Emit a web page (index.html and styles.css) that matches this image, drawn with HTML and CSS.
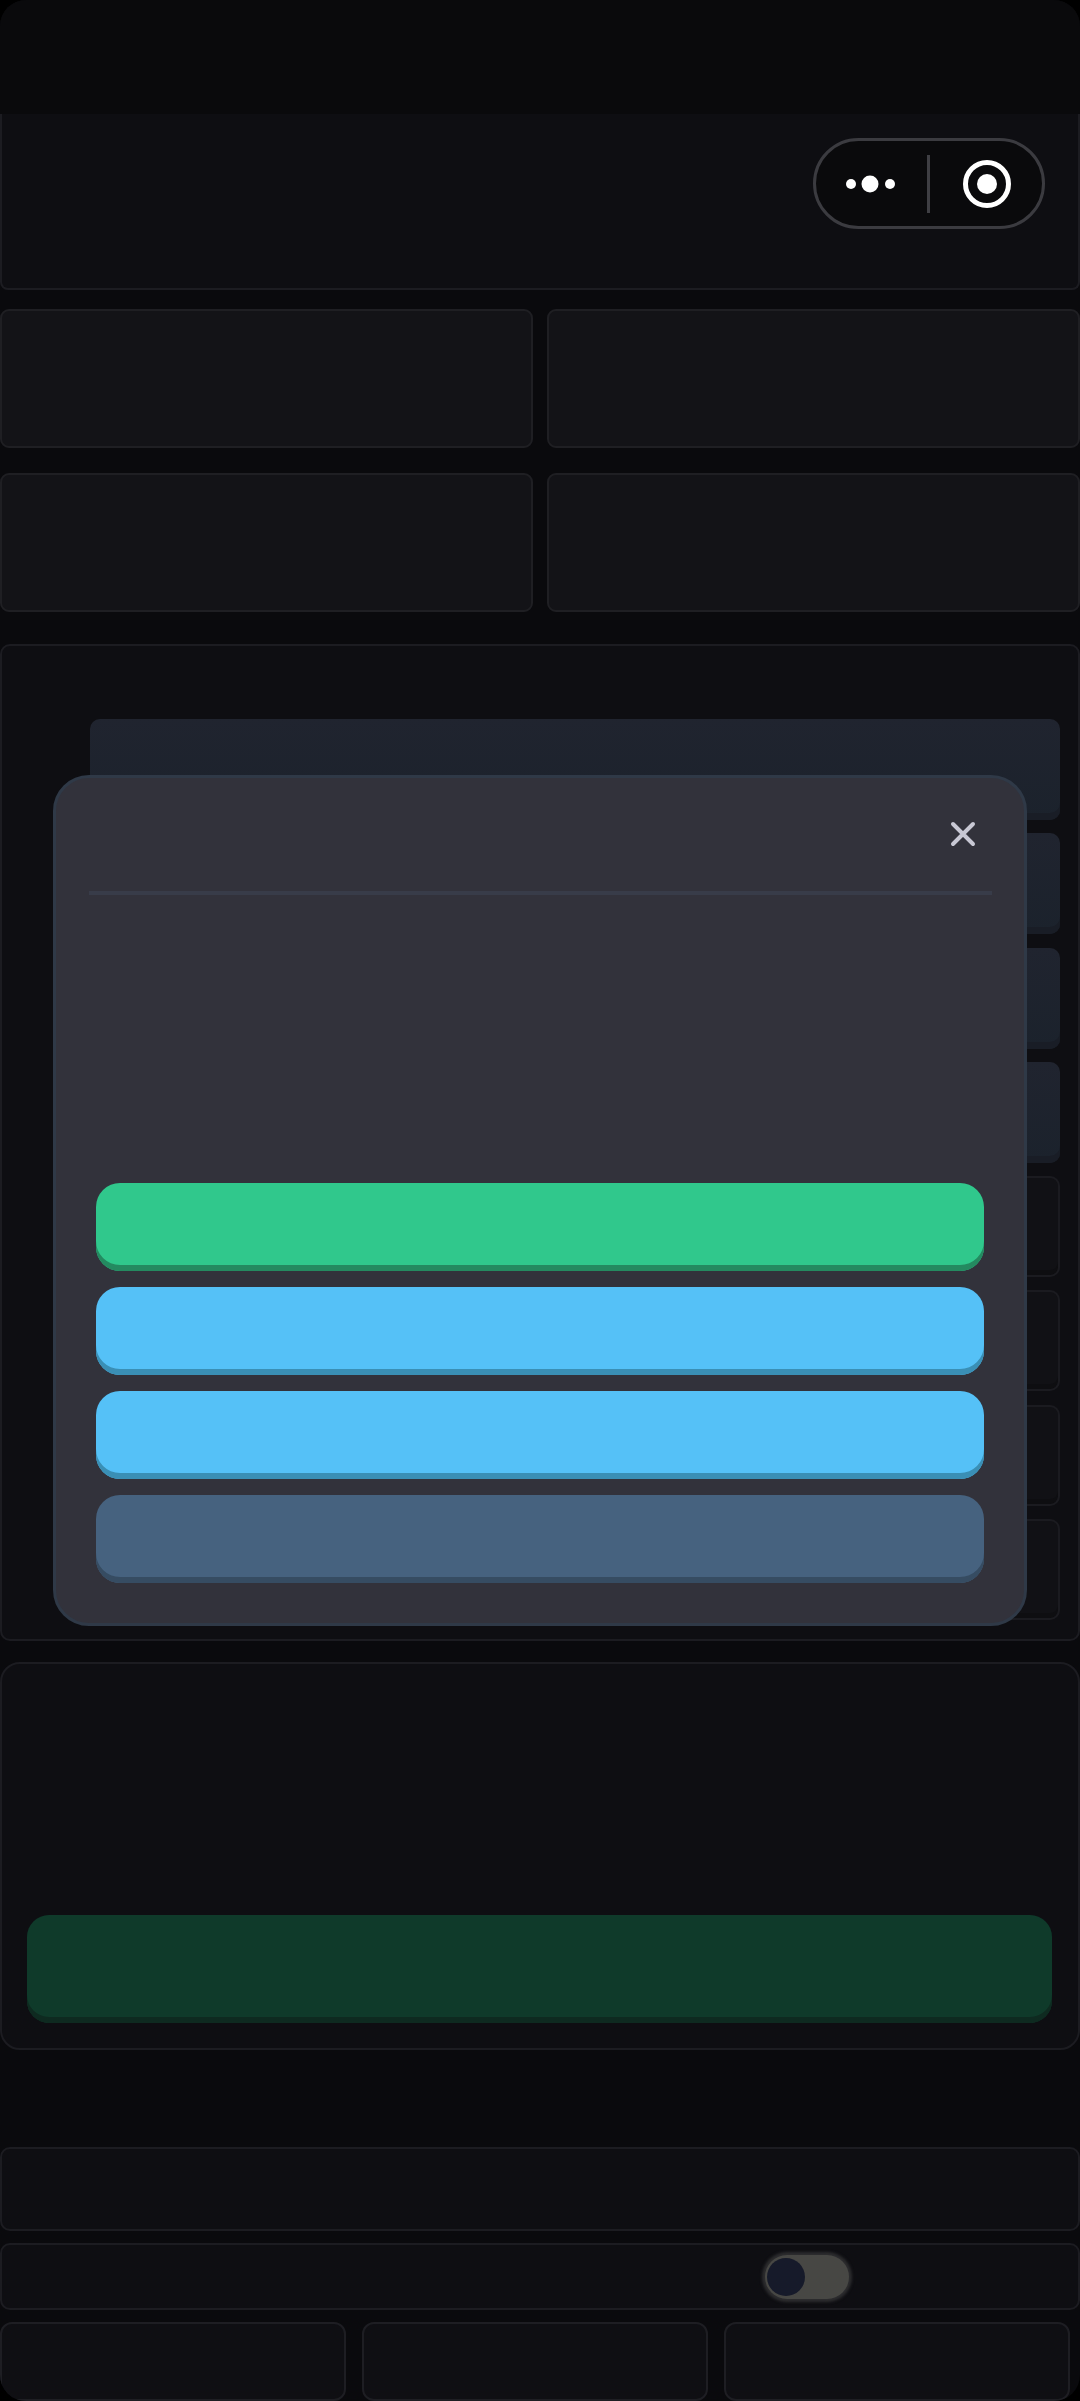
FILE: index.html
```html
<!DOCTYPE html>
<html lang="en">
<head>
<meta charset="utf-8">
<title>Dialog</title>
<link rel="stylesheet" href="styles.css">
</head>
<body>
<div class="screen">
  <div class="status"></div>
  <header class="head">
    <div class="capsule">
      <svg class="cap-dots" viewBox="0 0 60 20" aria-hidden="true"><circle cx="5" cy="10" r="5"/><circle cx="24" cy="10" r="8.5"/><circle cx="44" cy="10" r="5"/></svg>
      <span class="cap-line"></span>
      <svg class="cap-target" viewBox="0 0 48 48" aria-hidden="true"><circle class="ring" cx="24" cy="24" r="21.5"/><circle cx="24" cy="24" r="10"/></svg>
    </div>
  </header>
  <section class="grid">
    <div class="tile"></div><div class="tile"></div>
    <div class="tile"></div><div class="tile"></div>
  </section>
  <section class="list">
    <div class="row row-blue"></div>
    <div class="row row-blue"></div>
    <div class="row row-blue"></div>
    <div class="row row-blue"></div>
    <div class="row row-plain"></div>
    <div class="row row-plain"></div>
    <div class="row row-plain"></div>
    <div class="row row-plain"></div>
  </section>
  <section class="action">
    <div class="btn-dim"></div>
  </section>
  <section class="bars">
    <div class="bar"></div>
    <div class="bar bar-toggle"><span class="toggle"><span class="knob"></span></span></div>
    <div class="trio"><div class="cell"></div><div class="cell"></div><div class="cell"></div></div>
  </section>
  <div class="modal">
    <div class="modal-top">
      <svg class="close" viewBox="0 0 26 26" aria-hidden="true"><path d="M3 3 23 23M23 3 3 23"/></svg>
    </div>
    <div class="rule"></div>
    <div class="btns">
      <div class="btn btn-green"></div>
      <div class="btn btn-blue"></div>
      <div class="btn btn-blue"></div>
      <div class="btn btn-grey"></div>
    </div>
  </div>
</div>
</body>
</html>
```
FILE: styles.css
```css
* { box-sizing: border-box; }
html, body { margin: 0; padding: 0; background: #000; }
.screen {
  position: relative;
  width: 1080px;
  height: 2401px;
  overflow: hidden;
  border-radius: 26px;
  background: #0a0a0d;
}
.status { height: 114px; background: #0a0a0c; }
.head {
  height: 176px;
  background: #0e0e12;
  border: 2px solid #1c1c21;
  border-top: 0;
  border-radius: 0 0 8px 8px;
  display: flex;
  justify-content: flex-end;
  padding: 24px 33px 0 0;
}
.capsule {
  width: 232px;
  height: 91px;
  border: 3px solid #3b3b40;
  border-radius: 46px;
  background: #0a0a0c;
  display: flex;
  align-items: center;
  padding-left: 30px;
}
.cap-dots { width: 60px; height: 20px; fill: #fff; }
.cap-line { width: 3px; height: 58px; background: #3f3f44; margin-left: 21px; }
.cap-target { width: 48px; height: 48px; fill: #fff; margin-left: 33px; }
.cap-target .ring { fill: none; stroke: #fff; stroke-width: 5; }
.grid {
  margin-top: 19px;
  display: grid;
  grid-template-columns: 533px 533px;
  justify-content: space-between;
  grid-auto-rows: 139px;
  row-gap: 25px;
}
.tile { background: #131317; border: 2px solid #1f1f23; border-radius: 9px; }
.list {
  margin-top: 32px;
  height: 997px;
  background: #0e0e12;
  border: 2px solid #1c1c21;
  border-radius: 10px;
  padding: 73px 18px 0 88px;
  display: flex;
  flex-direction: column;
  gap: 13.3px;
}
.row { height: 101px; border-radius: 10px; flex: none; }
.row-blue { background: linear-gradient(#20242f, #1b222c); box-shadow: inset 0 -7px 0 #191d26; }
.row-plain { background: #111115; border: 2px solid #1b1b20; box-shadow: inset 0 -5px 0 #0e0e11; }
.action {
  margin-top: 21px;
  height: 388px;
  background: #0e0e12;
  border: 2px solid #1c1c21;
  border-radius: 20px;
  padding: 251px 26px 0 25px;
}
.btn-dim {
  height: 108px;
  background: #0f3a2a;
  border-radius: 22px;
  box-shadow: inset 0 -6px 0 #0e2a20;
}
.bars { margin-top: 97px; display: flex; flex-direction: column; gap: 12px; }
.bar {
  height: 84px;
  background: #0e0e12;
  border: 2px solid #1c1c21;
  border-radius: 10px;
}
.bar-toggle { height: 67px; display: flex; align-items: center; padding-left: 763px; }
.toggle {
  width: 84px;
  height: 44px;
  background: #474744;
  border-radius: 22px;
  box-shadow: 0 0 3px 3px #2d2d2f;
  display: flex;
  align-items: center;
}
.knob { width: 38px; height: 38px; border-radius: 50%; background: #161a2a; margin-left: 2px; }
.trio {
  display: grid;
  grid-template-columns: repeat(3, 346px);
  column-gap: 16px;
  height: 79px;
}
.cell {
  background: #0f0f13;
  border: 2px solid #1e1e23;
  border-radius: 12px;
}
.modal {
  position: absolute;
  left: 53px;
  top: 775px;
  width: 974px;
  height: 851px;
  background: #32323b;
  border: 3px solid #2f3947;
  border-radius: 36px;
  padding: 0 40px;
}
.modal-top { height: 113px; display: flex; justify-content: flex-end; padding: 43px 8px 0 0; }
.close { width: 26px; height: 26px; fill: none; stroke: #c8c8d4; stroke-width: 4; stroke-linecap: round; }
.rule { height: 4px; margin: 0 -8px 0 -7px; background: #383c49; }
.btns { margin-top: 288px; display: flex; flex-direction: column; gap: 16px; }
.btn { height: 88px; border-radius: 24px; }
.btn-green { background: #30c88c; box-shadow: inset 0 -6px 0 #248a60; }
.btn-blue { background: #55c1f7; box-shadow: inset 0 -6px 0 #3a8fb5; }
.btn-grey { background: #46627f; box-shadow: inset 0 -6px 0 #364c62; }
```
